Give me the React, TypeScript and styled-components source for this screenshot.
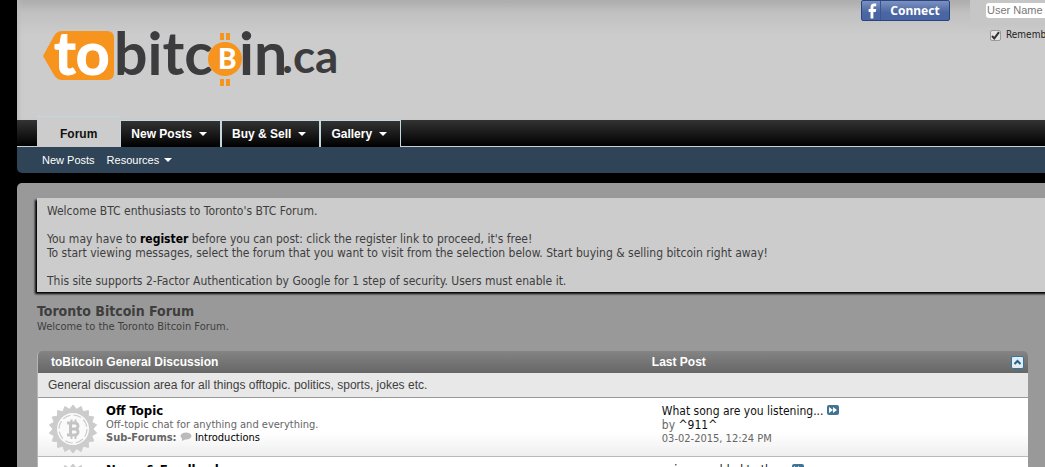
import React from 'react';
import styled, { createGlobalStyle } from 'styled-components';

const tahoma = '"DejaVu Sans Condensed", "Noto Sans", sans-serif';
const arial = '"Liberation Sans", Arial, sans-serif';

const GlobalStyle = createGlobalStyle`
  *, *::before, *::after { box-sizing: border-box; }
  html { background: #000; }
  body {
    margin: 0;
    overflow: hidden;
    color: #3e3e3e;
    font: 12px/14px ${tahoma};
  }
  a { color: inherit; text-decoration: none; }
  h1, h2, p { margin: 0; }
`;

const Page = styled.div`
  height: 100vh;
  padding-left: 17px;
  overflow: hidden;
`;

const Header = styled.header`
  display: flex;
  align-items: flex-start;
  height: 120px;
  padding-left: 24px;
  background: linear-gradient(#acacac, #c0c0c0 12px, #ccc 36px);
  box-shadow: inset 4px 0 4px -2px #bbb;
`;

const LogoLink = styled.a`
  display: block;
  margin-top: 10px;
  margin-right: auto;
`;

const ConnectButton = styled.button`
  display: flex;
  align-items: center;
  width: 89px;
  height: 21px;
  margin-right: 20px;
  padding: 0;
  border: 1px solid #29447e;
  border-radius: 2px;
  background: linear-gradient(#7b91c0, #4a66a3 60%, #4864a2);
  color: #fff;
  font: bold 12px/18px "Noto Sans", sans-serif;
  text-align: center;

  svg { flex: none; border-right: 1px solid #3a5592; }
  span { flex: 1; }
`;

const Login = styled.form`
  width: 75px;
  overflow: hidden;
`;

const LoginField = styled.div`
  height: 26px;
  padding: 3px 0 0 16px;
  border-radius: 0 0 0 4px;
  background: #c6c6c6;
`;

const UserInput = styled.input`
  display: block;
  width: 110px;
  height: 15px;
  padding: 0 1px;
  border: 0;
  border-radius: 3px;
  background: #fff;
  font: 11px/15px ${arial};
  &::placeholder { color: #777; opacity: 1; }
`;

const Remember = styled.label`
  display: flex;
  align-items: center;
  gap: 5px;
  padding: 3px 0 0 20px;
  color: #222;
  font-size: 10px;
  line-height: 12px;
  white-space: nowrap;
`;

const Tick = styled.input`
  appearance: none;
  flex: none;
  width: 11px;
  height: 11px;
  margin: 0;
  border: 1px solid #999;
  border-radius: 2px;
  background: #e4e4e4;
  &:checked {
    background: #e4e4e4 url("data:image/svg+xml,%3Csvg xmlns='http://www.w3.org/2000/svg' viewBox='0 0 9 9'%3E%3Cpath d='M1 5l2.3 2.4L8 1.2' fill='none' stroke='%23333' stroke-width='2'/%3E%3C/svg%3E");
  }
`;

const TabBar = styled.nav`
  display: flex;
  height: 27px;
  padding-left: 20px;
  border-bottom: 1px solid #c4d0d6;
  background: linear-gradient(#333, #000);
`;

const Tab = styled.a<{ $active?: boolean }>`
  display: flex;
  align-items: center;
  gap: 7px;
  height: ${p => (p.$active ? 31 : 27)}px;
  margin-top: ${p => (p.$active ? -4 : 0)}px;
  padding: ${p => (p.$active ? '4px 23px 0' : '0 13px 0 10px')};
  border: solid #c4d8e2;
  border-width: ${p => (p.$active ? '1px 0 0' : '1px 1px 0 1px')};
  background: ${p => (p.$active ? '#ccc' : 'linear-gradient(#333, #000)')};
  color: ${p => (p.$active ? '#111' : '#fff')};
  font: bold 12px/15px ${arial};
`;

const SubNav = styled.nav`
  display: flex;
  align-items: center;
  gap: 12px;
  height: 26px;
  padding-left: 25px;
  border-bottom-left-radius: 5px;
  background: #2f4456;
  color: #fff;
  font: 11px/14px ${arial};
  a { display: flex; align-items: center; gap: 5px; }
`;

const Content = styled.main`
  min-height: 400px;
  margin-top: 10px;
  padding: 15px 17px 0 20px;
  border-top-left-radius: 5px;
  background: #999;
`;

const Notice = styled.section`
  margin-right: -24px;
  padding: 6px 10px 4px;
  background: #ccc;
  box-shadow: -2px 2px 2px #000;
  p + p { margin-top: 14px; }
  a { color: #000; font-weight: bold; }
`;

const Title = styled.h1`
  margin-top: 11px;
  font-size: 14px;
  line-height: 17px;
`;

const Tagline = styled.p`
  font-size: 11px;
  line-height: 14px;
`;

const ForumTable = styled.table`
  width: 100%;
  margin-top: 17px;
  border-collapse: separate;
  border-spacing: 0;
  border-left: 1px solid #b5b5b5;
  border-radius: 5px 5px 0 0;
  table-layout: fixed;
  overflow: hidden;
  th, td { padding: 0; text-align: left; vertical-align: top; }
  thead th {
    height: 22px;
    background: linear-gradient(#848484, #666);
    color: #fff;
    font: bold 12px/22px ${arial};
  }
`;

const HeadCell = styled.th`
  && { padding-left: 13px; }
`;

const PostHead = styled.div`
  display: flex;
  justify-content: space-between;
  align-items: center;
  padding-right: 4px;
`;

const Collapse = styled.button`
  width: 13px;
  height: 13px;
  padding: 0;
  border: 1px solid #2f78a5;
  border-radius: 2px;
  background: #e5edf2;
  svg { display: block; }
`;

const Description = styled.td`
  && {
    height: 25px;
    padding-left: 10px;
    border-bottom: 1px solid #999;
    background: #e8e8e8;
    font: 12px/24px ${arial};
  }
`;

const Cell = styled.td`
  && {
    height: 59px;
    padding: 6px 10px 0;
    border-bottom: 1px solid #b9b9b9;
    background: linear-gradient(#fff 60%, #eee);
  }
`;

const ForumInfo = styled.div`
  display: flex;
  gap: 8px;
`;

const ForumName = styled.h2`
  color: #000;
  font-size: 13px;
  line-height: 14px;
`;

const Small = styled.p`
  color: #666;
  font-size: 11px;
  line-height: 13px;
  a { color: #000; }
`;

const Post = styled.p`
  color: #666;
  a { color: #111; }
`;

const Arrow = () => (
  <svg width="8" height="4" viewBox="0 0 8 4" aria-hidden="true">
    <path d="M0 0h8L4 4z" fill="currentColor" />
  </svg>
);

const Logo = () => (
  <svg width="310" height="90" viewBox="41 10 310 90" role="img" aria-label="tobitcoin.ca" fontFamily="Lato, sans-serif" fontWeight="700">
    <path d="M43 56L54 36Q57 31 62 31H107Q114 31 114 38V73Q114 80 107 80H62Q57 80 54 75Z" fill="#f7941e" />
    <text x="54" y="75" fontSize="59" fill="#fff" stroke="#fff">to</text>
    <text x="114" y="75" fontSize="59" fill="#3c3c3e">bitc</text>
    <circle cx="225" cy="59" r="17" fill="#f7941e" />
    <path d="M220 33h4v7h-4zM226 33h4v7h-4zM220 79h4v7h-4zM226 79h4v7h-4z" fill="#f7941e" />
    <text x="218" y="69" fontSize="28" fontWeight="900" fill="#fff">B</text>
    <text x="239" y="75" fontSize="59" fill="#3c3c3e">in</text>
    <text x="282" y="73" fontSize="46" fill="#3c3c3e">.ca</text>
  </svg>
);

const sealPoints = Array.from({ length: 36 }, (_, i) => {
  const r = i % 2 ? 20 : 24;
  const a = (i * Math.PI) / 18;
  return `${24 + r * Math.sin(a)},${24 - r * Math.cos(a)}`;
}).join(' ');

const SealSvg = styled.svg`
  flex: none;
`;

const Seal = () => (
  <SealSvg width="50" height="50" viewBox="-1 -1 50 50" aria-hidden="true">
    <polygon points={sealPoints} fill="#ccc" stroke="#ccc" strokeLinejoin="round" />
    <circle cx="24" cy="24" r="16" fill="#fafafa" />
    <circle cx="24" cy="24" r="14" fill="none" stroke="#ccc" strokeWidth="1.2" strokeDasharray="8 3" />
    <g fill="none" stroke="#c4c4c4" strokeWidth="3">
      <path d="M18 18h8a3 3 0 0 1 0 6h-4M26 24a3 3 0 0 1 0 6h-8M21.500 18v12" />
      <path d="M22.500 14.500v3M26.500 14.500v3M22.500 31v3M26.500 31v3" strokeWidth="2" />
    </g>
  </SealSvg>
);

const LastPostIcon = () => (
  <svg width="12" height="10" viewBox="0 0 12 10" role="img" aria-label="Go to last post">
    <rect width="12" height="10" rx="2" fill="#417394" />
    <path d="M2 2l4 3-4 3zM6 2l4 3-4 3z" fill="#fff" />
  </svg>
);

const Bubble = () => (
  <svg width="12" height="9" viewBox="0 0 12 9" aria-hidden="true">
    <ellipse cx="6" cy="4" rx="5.500" ry="3.500" fill="#bbb" />
    <path d="M2 5v4l4-2z" fill="#bbb" />
  </svg>
);

export default function App() {
  return (
    <>
      <GlobalStyle />
      <Page>
        <Header>
          <LogoLink href="#"><Logo /></LogoLink>
          <ConnectButton type="button">
            <svg width="19" height="19" viewBox="0 0 19 19" aria-hidden="true">
              <path d="M9 18V11H7V8h2V6Q9 2 13 2h2v3h-1.500Q12 5 12 6.500V8h3l-.5 3H12v7z" fill="#fff" />
            </svg>
            <span>Connect</span>
          </ConnectButton>
          <Login>
            <LoginField><UserInput placeholder="User Name" aria-label="User Name" /></LoginField>
            <Remember><Tick type="checkbox" defaultChecked />Remember Me?</Remember>
          </Login>
        </Header>
        <TabBar>
          <Tab href="#" $active>Forum</Tab>
          <Tab href="#">New Posts <Arrow /></Tab>
          <Tab href="#">Buy &amp; Sell <Arrow /></Tab>
          <Tab href="#">Gallery <Arrow /></Tab>
        </TabBar>
        <SubNav>
          <a href="#">New Posts</a>
          <a href="#">Resources <Arrow /></a>
        </SubNav>
        <Content>
          <Notice>
            <p>Welcome BTC enthusiasts to Toronto's BTC Forum.</p>
            <p>
              You may have to <a href="#">register</a> before you can post: click the register link to proceed, it's free!<br />
              To start viewing messages, select the forum that you want to visit from the selection below. Start buying &amp; selling bitcoin right away!
            </p>
            <p>This site supports 2-Factor Authentication by Google for 1 step of security. Users must enable it.</p>
          </Notice>
          <Title>Toronto Bitcoin Forum</Title>
          <Tagline>Welcome to the Toronto Bitcoin Forum.</Tagline>
          <ForumTable>
            <colgroup><col /><col style={{ width: '38%' }} /></colgroup>
            <thead>
              <tr>
                <HeadCell scope="col">toBitcoin General Discussion</HeadCell>
                <th scope="col">
                  <PostHead>
                    Last Post
                    <Collapse type="button" aria-label="Collapse category">
                      <svg width="11" height="11" viewBox="0 0 11 11"><path d="M2.500 7l3-3 3 3" fill="none" stroke="#1f6390" strokeWidth="2" /></svg>
                    </Collapse>
                  </PostHead>
                </th>
              </tr>
            </thead>
            <tbody>
              <tr><Description colSpan={2}>General discussion area for all things offtopic. politics, sports, jokes etc.</Description></tr>
              <tr>
                <Cell>
                  <ForumInfo>
                    <Seal />
                    <div>
                      <ForumName><a href="#">Off Topic</a></ForumName>
                      <Small>Off-topic chat for anything and everything.</Small>
                      <Small><b>Sub-Forums:</b> <Bubble /> <a href="#">Introductions</a></Small>
                    </div>
                  </ForumInfo>
                </Cell>
                <Cell>
                  <Post><a href="#">What song are you listening...</a> <LastPostIcon /></Post>
                  <Post>by <a href="#">^911^</a></Post>
                  <Small>03-02-2015, 12:24 PM</Small>
                </Cell>
              </tr>
              <tr>
                <Cell>
                  <ForumInfo>
                    <Seal />
                    <ForumName><a href="#">News &amp; Feedback</a></ForumName>
                  </ForumInfo>
                </Cell>
                <Cell><Post><a href="#">coins.ca added to the...</a> <LastPostIcon /></Post></Cell>
              </tr>
            </tbody>
          </ForumTable>
        </Content>
      </Page>
    </>
  );
}
